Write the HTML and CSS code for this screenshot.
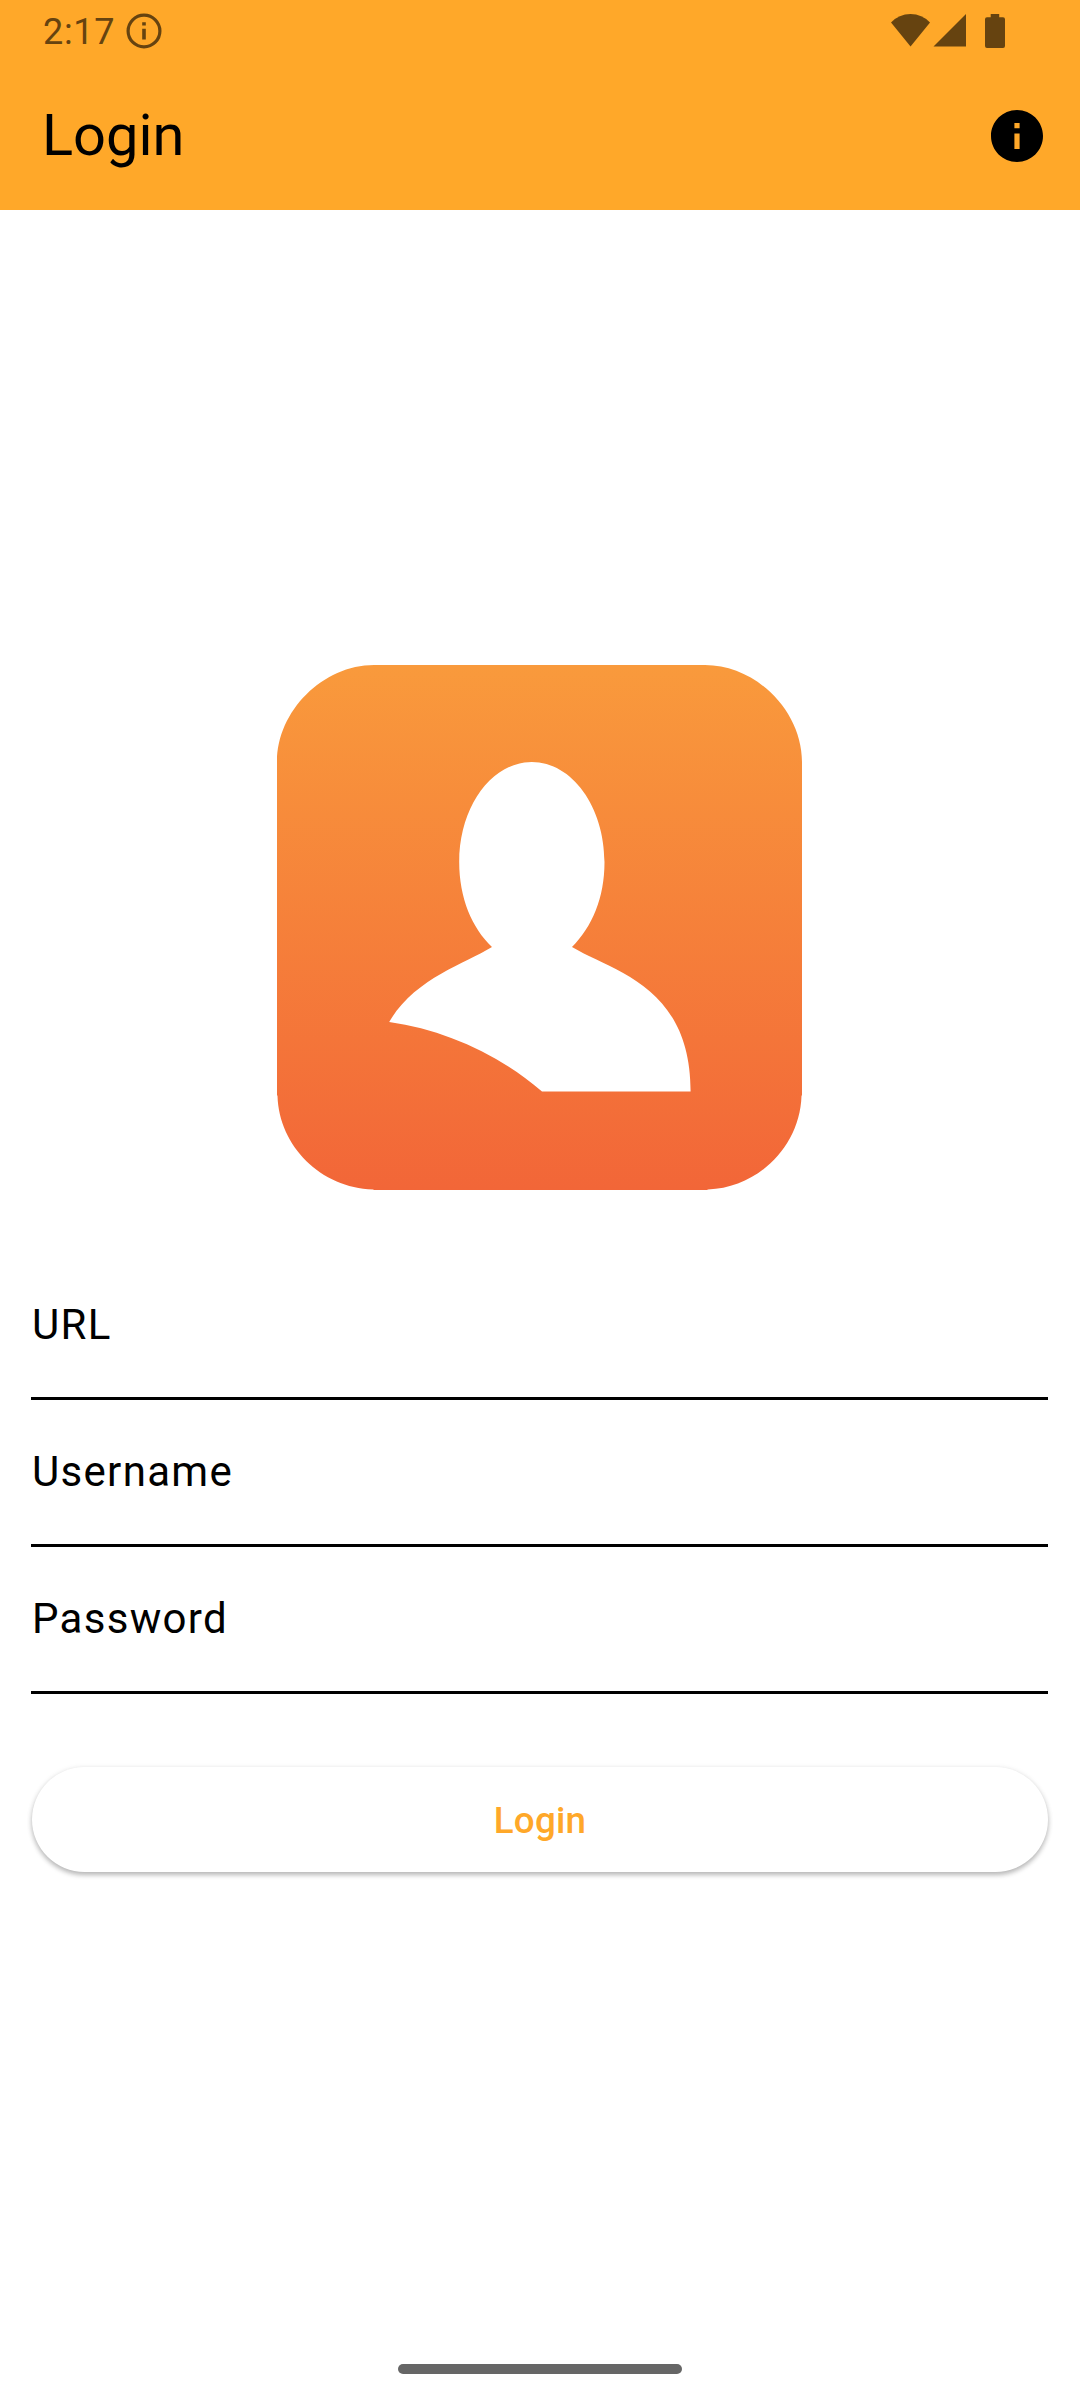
FILE: index.html
```html
<!DOCTYPE html>
<html lang="en">
<head>
<meta charset="utf-8">
<title>Login</title>
<link rel="stylesheet" href="styles.css">
</head>
<body>
<div class="screen">
  <header class="top">
    <div class="status">
      <span class="clock">2:17</span>
      <svg class="notice" viewBox="0 0 36 36"><circle cx="18" cy="18" r="15.9" fill="none" stroke="currentColor" stroke-width="3.2"/><path d="M16.2 9.2h3.6v3.3h-3.6zM16.2 15.8h3.6v10.800h-3.6z" fill="currentColor"/></svg>
      <svg class="signals" viewBox="0 0 116 36" fill="currentColor"><path d="M0 9.500Q8 1 19.500 1T39 9.500L19.500 33.500z"/><path d="M42.500 33.500L75 1V33.500z"/><path d="M99.700 1h8.500v3.300h3.800a2 2 0 0 1 2 2v26.700a2 2 0 0 1-2 2H96a2 2 0 0 1-2-2V6.300a2 2 0 0 1 2-2h3.700z"/></svg>
    </div>
    <div class="appbar">
      <h1 class="title">Login</h1>
      <svg class="info" viewBox="2 2 20 20"><path d="M12 2C6.480 2 2 6.480 2 12s4.480 10 10 10 10-4.480 10-10S17.520 2 12 2zm1 15h-2v-6h2v6zm0-8h-2V7h2v2z"/></svg>
    </div>
  </header>
  <main class="content">
    <svg class="logo" viewBox="0 0 525 525">
      <defs><linearGradient id="glow" x1="0" y1="0" x2="0" y2="1"><stop offset="0" stop-color="#f99a3c"/><stop offset="1" stop-color="#f26638"/></linearGradient></defs>
      <path fill="url(#glow)" d="M97 0H428C479 0 525 46 525 97V430L524.500 431C523 481 481 523 431 524.500L430 525H97L96 524.500C44 523 2 481 .5 431L0 430V97C0 46 46 0 97 0Z"/>
      <path fill="#fff" d="M215 282C195 263 182.200 233 182.200 197C182.200 142 214.500 97 254.800 97S327.500 142 327.500 197C327.500 233 315 262 295 282C335 306 413.600 320 413.600 426.500H265C221 389 168 365 112.200 357C137 314 187 299 215 282Z"/>
    </svg>
    <form class="form">
      <div class="field">URL</div>
      <div class="field">Username</div>
      <div class="field">Password</div>
      <button class="submit" type="button">Login</button>
    </form>
  </main>
  <div class="handle"></div>
</div>
</body>
</html>
```
FILE: styles.css
```css
* { box-sizing: border-box; }
body { margin: 0; background: #fff; font-family: Roboto, sans-serif; color: #000; }
.screen { width: 1080px; height: 2400px; display: flex; flex-direction: column; }
.top { height: 210px; background: #ffa829; }
.status { height: 63px; padding: 0 73px 0 43px; display: flex; align-items: center; color: #664310; }
.clock { font-size: 36px; line-height: 42px; letter-spacing: 0.7px; }
.notice { width: 36px; height: 36px; margin: 0 0 1px 11px; }
.signals { width: 116px; height: 36px; margin: 0 0 1px auto; }
.appbar { height: 147px; padding: 0 37px 0 42px; display: flex; align-items: center; justify-content: space-between; }
.title { margin: 0; padding-bottom: 4px; font-size: 57.75px; font-weight: 400; line-height: 68px; }
.info { width: 52px; height: 52px; margin-bottom: 1px; }
.content { flex: 1; display: flex; flex-direction: column; align-items: center; padding: 455px 32px 0 31px; }
.logo { width: 525px; height: 525px; flex: none; }
.form { width: 100%; padding-top: 63px; }
.field { height: 147px; border-bottom: 3px solid #000; padding: 47px 0 0 1px; font-size: 42px; line-height: 50px; letter-spacing: 1.31px; }
.submit { display: block; width: calc(100% - 1px); height: 105px; margin: 73px 0 0 1px; padding: 2px 0 0; border: 0; border-radius: 53px; background: #fff; color: #ffa829; font: 500 36.75px/44px Roboto, sans-serif; letter-spacing: 0.26px; box-shadow: 0 3px 5px rgba(0,0,0,.25), 0 1px 6px rgba(0,0,0,.08); }
.handle { width: 284px; height: 10px; margin: 0 auto 26px; border-radius: 5px; background: #666; }
```
